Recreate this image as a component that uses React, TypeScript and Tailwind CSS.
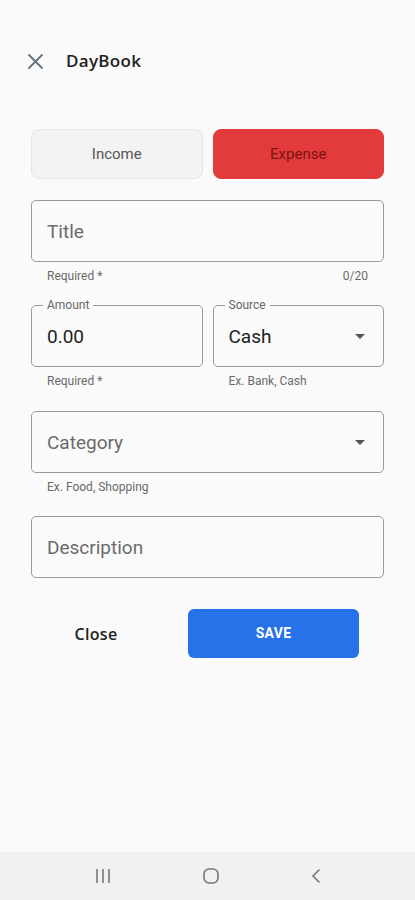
import { useState } from "react";

const font = { fontFamily: "Roboto, 'Noto Sans', sans-serif" };
const headFont = { fontFamily: "'Open Sans', Roboto, sans-serif" };

function Caret() {
  return (
    <svg width="10" height="5" viewBox="0 0 10 5" className="shrink-0">
      <path d="M0 0 L10 0 L5 5 Z" fill="#555" />
    </svg>
  );
}

function Field({ label, value, placeholder, caret }: { label?: string; value?: string; placeholder?: string; caret?: boolean }) {
  return (
    <div className="relative h-[62px] rounded-[5px] border border-[#9a9a9a] flex items-center pl-[15px] pr-[18px]">
      {label && (
        <span className="absolute -top-[8px] left-[11px] px-[4px] bg-[#fafafa] text-[12px] leading-[14px] text-[#666]">{label}</span>
      )}
      <span className={`flex-1 text-[19px] pt-[2px] ${value ? "text-[#222]" : "text-[#6b6b6b]"}`}>{value ?? placeholder}</span>
      {caret && <Caret />}
    </div>
  );
}

function Helper({ left, right }: { left: string; right?: string }) {
  return (
    <div className="flex justify-between px-[16px] mt-[6px] h-[16px] text-[12px] leading-[16px] text-[#6a6a6a]">
      <span>{left}</span>
      {right && <span>{right}</span>}
    </div>
  );
}

export default function App() {
  const [type, setType] = useState<"income" | "expense">("expense");
  return (
    <div className="min-h-[900px] flex flex-col bg-[#fafafa]" style={font}>
      <div className="flex-1">
        <div className="mt-[33px] h-[56px] flex items-center pl-[28px]">
          <svg width="15" height="15" viewBox="0 0 15 15" stroke="#5f7382" strokeWidth="1.8" strokeLinecap="round">
            <path d="M1 1 L14 14 M14 1 L1 14" />
          </svg>
          <span className="ml-[23px] text-[17px] font-semibold text-[#222] tracking-[0.3px]" style={headFont}>DayBook</span>
        </div>

        <div className="px-[31px]">
          <div className="mt-[40px] grid grid-cols-2 gap-[10px]">
            <button
              onClick={() => setType("income")}
              className={`h-[50px] rounded-[8px] text-[15px] border ${type === "income" ? "bg-[#e33b3b] border-[#e33b3b] text-[#7a1414]" : "bg-[#f3f2f4] border-[#e6e4e8] text-[#555]"}`}
            >
              Income
            </button>
            <button
              onClick={() => setType("expense")}
              className={`h-[50px] rounded-[8px] text-[15px] border ${type === "expense" ? "bg-[#e33b3b] border-[#e33b3b] text-[#7a1414]" : "bg-[#f3f2f4] border-[#e6e4e8] text-[#555]"}`}
            >
              Expense
            </button>
          </div>

          <div className="mt-[21px]">
            <Field placeholder="Title" />
            <Helper left="Required *" right="0/20" />
          </div>

          <div className="mt-[21px] grid grid-cols-2 gap-[10px]">
            <div>
              <Field label="Amount" value="0.00" />
              <Helper left="Required *" />
            </div>
            <div>
              <Field label="Source" value="Cash" caret />
              <Helper left="Ex. Bank, Cash" />
            </div>
          </div>

          <div className="mt-[22px]">
            <Field placeholder="Category" caret />
            <Helper left="Ex. Food, Shopping" />
          </div>

          <div className="mt-[21px]">
            <Field placeholder="Description" />
          </div>

          <div className="mt-[31px] flex items-center">
            <button className="w-[130px] h-[49px] text-[16px] font-semibold text-[#222] tracking-[0.3px]" style={headFont}>Close</button>
            <button className="ml-[27px] w-[171px] h-[49px] rounded-[6px] bg-[#2672e8] text-white text-[14px] font-bold tracking-[0.3px]">
              SAVE
            </button>
          </div>
        </div>
      </div>

      <div className="h-[48px] bg-[#f1f1f1] flex items-center justify-center gap-[92px]">
        <svg width="16" height="14" viewBox="0 0 16 14" stroke="#777" strokeWidth="1.6">
          <path d="M2 0 V14 M8 0 V14 M14 0 V14" />
        </svg>
        <svg width="16" height="16" viewBox="0 0 16 16" fill="none" stroke="#777" strokeWidth="1.6">
          <rect x="1" y="1" width="14" height="14" rx="5" />
        </svg>
        <svg width="10" height="14" viewBox="0 0 10 14" fill="none" stroke="#777" strokeWidth="1.6" strokeLinecap="round">
          <path d="M8 1 L2 7 L8 13" />
        </svg>
      </div>
    </div>
  );
}
